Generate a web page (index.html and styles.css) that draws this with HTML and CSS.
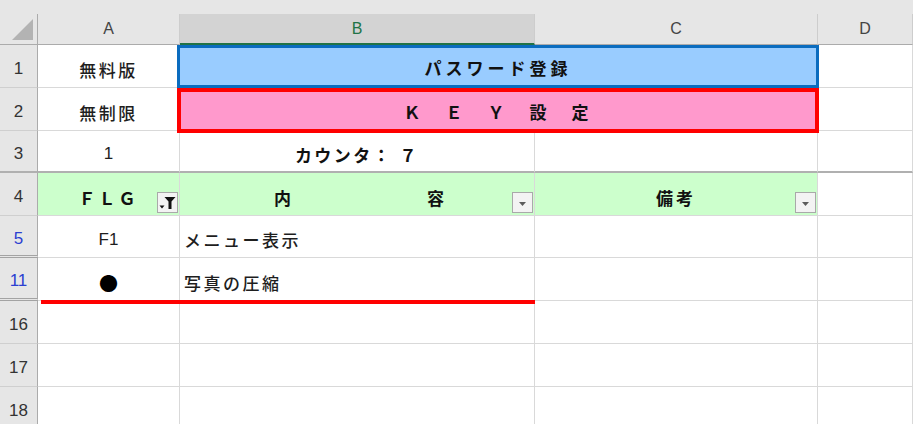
FILE: index.html
```html
<!DOCTYPE html>
<html lang="ja">
<head>
<meta charset="utf-8">
<title>KEY設定</title>
<link rel="stylesheet" href="styles.css">
</head>
<body>
<div class="sheet">
  <div class="topbar"></div>
  <div class="grid">
    <!-- column headers -->
    <div class="corner">
      <svg width="22" height="23" viewBox="0 0 22 23"><path d="M0 22H21V1Z" fill="#b3b3b3"/></svg>
    </div>
    <div class="ch">A</div>
    <div class="ch sel">B</div>
    <div class="ch">C</div>
    <div class="ch">D</div>

    <!-- row 1 -->
    <div class="rh">1</div>
    <div class="cell">無料版</div>
    <div class="cell merged blue bold wide">パスワード登録</div>
    <div class="cell"></div>

    <!-- row 2 -->
    <div class="rh">2</div>
    <div class="cell">無制限</div>
    <div class="cell merged pink bold wide">Ｋ　Ｅ　Ｙ　設　定</div>
    <div class="cell"></div>

    <!-- row 3 (frozen panes end here) -->
    <div class="rh frz">3</div>
    <div class="cell frz latin">1</div>
    <div class="cell frz bold">カウンタ： ７</div>
    <div class="cell frz"></div>
    <div class="cell frz"></div>

    <!-- row 4: table header with filter buttons -->
    <div class="rh">4</div>
    <div class="cell head bold">ＦＬＧ
      <span class="fbtn"><svg width="19" height="19" viewBox="0 0 19 19"><path d="M1.5 12.5h5l-2.5 3z" fill="#111"/><path d="M6.5 4h11l-4 4.6V16h-3V8.6z" fill="#111"/></svg></span>
    </div>
    <div class="cell head bold">
      <span class="spread"><span>内</span><span>容</span></span>
      <span class="fbtn"><svg width="19" height="19" viewBox="0 0 19 19"><path d="M6 9h7l-3.5 4z" fill="#5c5c5c"/></svg></span>
    </div>
    <div class="cell head bold wide">備考
      <span class="fbtn"><svg width="19" height="19" viewBox="0 0 19 19"><path d="M6 9h7l-3.5 4z" fill="#5c5c5c"/></svg></span>
    </div>
    <div class="cell"></div>

    <!-- row 5 -->
    <div class="rh flt hid">5</div>
    <div class="cell latin">F1</div>
    <div class="cell left">メニュー表示</div>
    <div class="cell"></div>
    <div class="cell"></div>

    <!-- row 11 -->
    <div class="rh flt hid">11</div>
    <div class="cell dot">●</div>
    <div class="cell left">写真の圧縮</div>
    <div class="cell"></div>
    <div class="cell"></div>

    <!-- rows 16-18 -->
    <div class="rh">16</div>
    <div class="cell"></div>
    <div class="cell"></div>
    <div class="cell"></div>
    <div class="cell"></div>

    <div class="rh">17</div>
    <div class="cell"></div>
    <div class="cell"></div>
    <div class="cell"></div>
    <div class="cell"></div>

    <div class="rh">18</div>
    <div class="cell"></div>
    <div class="cell"></div>
    <div class="cell"></div>
    <div class="cell"></div>
  </div>
  <!-- hand-drawn red underline shape -->
  <div class="mark"></div>
</div>
</body>
</html>
```

FILE: styles.css
```css
html, body {
  margin: 0;
  padding: 0;
  background: #fff;
  overflow: hidden;
}

.sheet {
  position: relative;
  width: 913px;
  height: 424px;
  overflow: hidden;
  font-family: "Liberation Sans", "Noto Sans CJK JP", sans-serif;
}

.topbar {
  height: 14px;
  background: #e6e6e6;
}

.grid {
  display: grid;
  grid-template-columns: 38px 142px 355px 283px 95px;
  grid-template-rows: 31px 43px 43px 42px 43px 42px 43px 43px 43px 43px;
}

.grid > div {
  box-sizing: border-box;
}

/* headers */
.corner {
  background: #e6e6e6;
  border-right: 1px solid #ababab;
  border-bottom: 1px solid #ababab;
  display: flex;
  align-items: flex-end;
  justify-content: flex-end;
  padding: 0 3px 3px 0;
}

.corner svg {
  display: block;
}

.ch {
  background: #e6e6e6;
  border-right: 1px solid #cdcdcd;
  border-bottom: 1px solid #ababab;
  display: flex;
  align-items: center;
  justify-content: center;
  font-size: 16px;
  color: #444;
}

.ch.sel {
  background: #d3d3d3;
  color: #217346;
  border-bottom: 2px solid #217346;
}

.rh {
  background: #e6e6e6;
  border-right: 1px solid #ababab;
  border-bottom: 1px solid #cfcfcf;
  display: flex;
  align-items: center;
  justify-content: center;
  padding-top: 6px;
  font-size: 17px;
  color: #333;
}

.rh.flt {
  color: #2b3fd1;
}

.rh.hid {
  border-bottom: 3px double #a3a3a3;
}

/* cells */
.cell {
  background: #fff;
  border-right: 1px solid #d9d9d9;
  border-bottom: 1px solid #d9d9d9;
  display: flex;
  align-items: center;
  justify-content: center;
  padding-top: 6px;
  font-size: 17px;
  font-weight: 500;
  letter-spacing: 2.5px;
  color: #1e1e1e;
  white-space: nowrap;
}

.cell.latin {
  letter-spacing: 0;
  font-weight: 400;
}

.cell.left {
  justify-content: flex-start;
  padding-left: 4px;
}

.cell.bold {
  font-weight: 700;
  color: #111;
}

.wide {
  letter-spacing: 4px;
}

.frz {
  border-bottom: 2px solid #b0b0b0;
}

.merged {
  grid-column: span 2;
  z-index: 2;
  margin-left: -3px;
  margin-right: -1px;
  padding-top: 2px;
}

.blue {
  background: #99ccff;
  border: 3px solid #0a6cbf;
}

.pink {
  background: #ff99cc;
  border: 4px solid #ff0000;
  margin-bottom: -2px;
}

.head {
  position: relative;
  background: #ccffcc;
  letter-spacing: 3px;
}

.spread {
  display: flex;
  justify-content: space-between;
  width: 170px;
  margin-left: 4px;
  letter-spacing: 0;
}

.fbtn {
  position: absolute;
  right: 1px;
  bottom: 2px;
  width: 21px;
  height: 21px;
  box-sizing: border-box;
  border: 1px solid #a9a9a9;
  background: #f3f3f3;
  display: flex;
  align-items: center;
  justify-content: center;
}

.fbtn svg {
  display: block;
}

.dot {
  font-family: "Noto Sans CJK JP", sans-serif;
  font-size: 19px;
  color: #000;
  letter-spacing: 0;
}

.mark {
  position: absolute;
  left: 41px;
  top: 300px;
  width: 494px;
  height: 4px;
  background: #ff0000;
}
```
